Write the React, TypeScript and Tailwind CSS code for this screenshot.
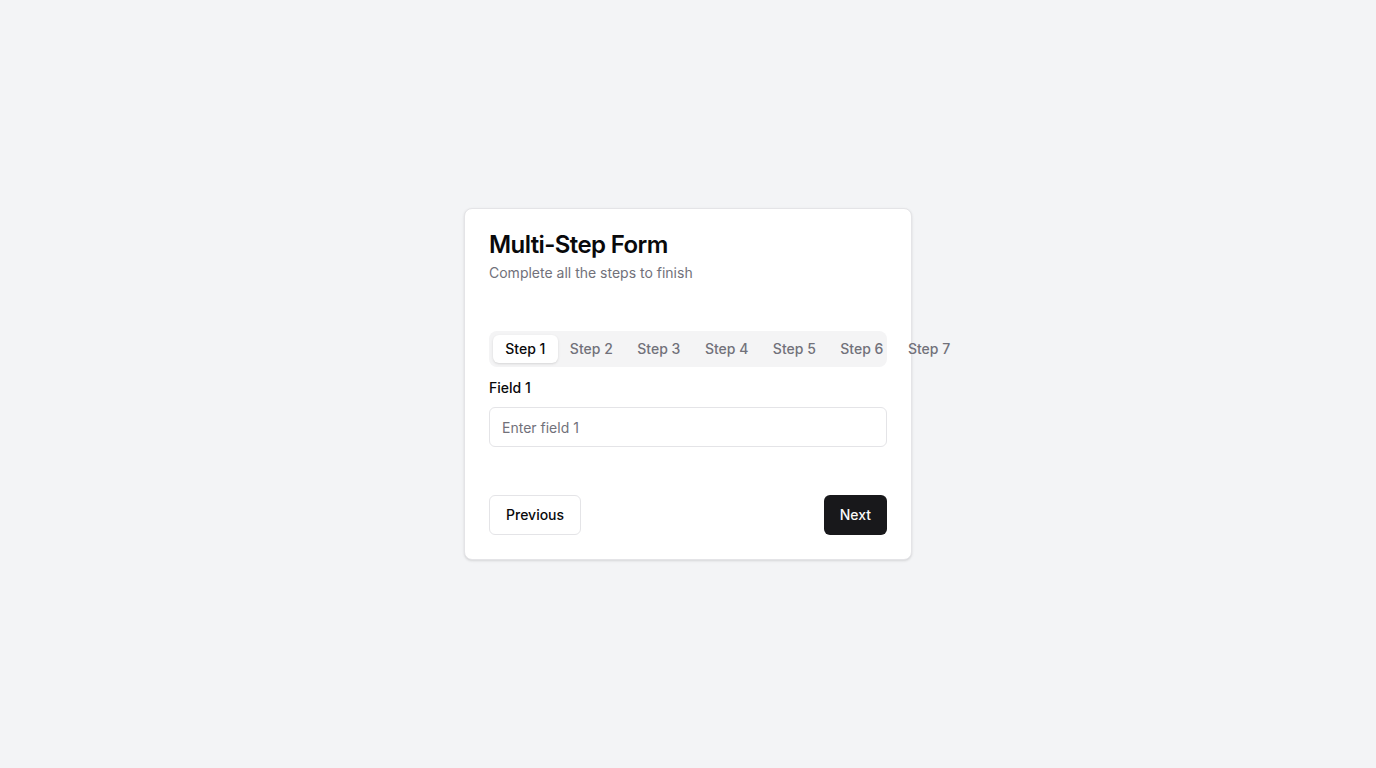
import { useState } from 'react'

const steps = [1, 2, 3, 4, 5, 6, 7]

export default function App() {
  const [step, setStep] = useState(1)

  return (
    <div
      className="min-h-screen bg-[#f3f4f6] flex items-center justify-center"
      style={{ fontFamily: 'Inter, "Noto Sans", sans-serif' }}
    >
      <div className="w-[448px] rounded-lg border border-[#e4e4e7] bg-white p-6 shadow-sm">
        {/* Header */}
        <div className="flex flex-col">
          <h2 className="text-2xl font-semibold leading-none tracking-tight text-[#09090b]">
            Multi-Step Form
          </h2>
          <p className="mt-1.5 text-sm leading-5 text-[#71717a]">
            Complete all the steps to finish
          </p>
        </div>

        {/* Tabs */}
        <div className="mt-[48px] flex h-9 w-full items-center rounded-lg bg-[#f4f4f5] p-1">
          {steps.map((s) => (
            <button
              key={s}
              onClick={() => setStep(s)}
              className={
                s === step
                  ? 'h-full shrink-0 whitespace-nowrap rounded-md bg-white px-[12.25px] text-sm font-medium text-[#09090b] shadow-sm'
                  : 'h-full shrink-0 whitespace-nowrap rounded-md px-[12.25px] text-sm font-medium text-[#71717a]'
              }
            >
              Step {s}
            </button>
          ))}
        </div>

        {/* Field */}
        <label className="mt-[11px] block text-sm font-medium leading-5 text-[#09090b]">
          Field {step}
        </label>
        <input
          placeholder={`Enter field ${step}`}
          className="mt-[9px] h-10 w-full rounded-md border border-[#e4e4e7] bg-white px-3 pt-px text-sm text-[#09090b] placeholder:text-[#71717a] outline-none"
        />

        {/* Footer */}
        <div className="mt-12 flex items-center justify-between">
          <button
            onClick={() => setStep(Math.max(1, step - 1))}
            className="h-10 rounded-md border border-[#e4e4e7] bg-white px-4 text-sm font-medium text-[#09090b]"
          >
            Previous
          </button>
          <button
            onClick={() => setStep(Math.min(7, step + 1))}
            className="h-10 rounded-md bg-[#18181b] px-4 text-sm font-medium text-[#fafafa]"
          >
            Next
          </button>
        </div>
      </div>
    </div>
  )
}
